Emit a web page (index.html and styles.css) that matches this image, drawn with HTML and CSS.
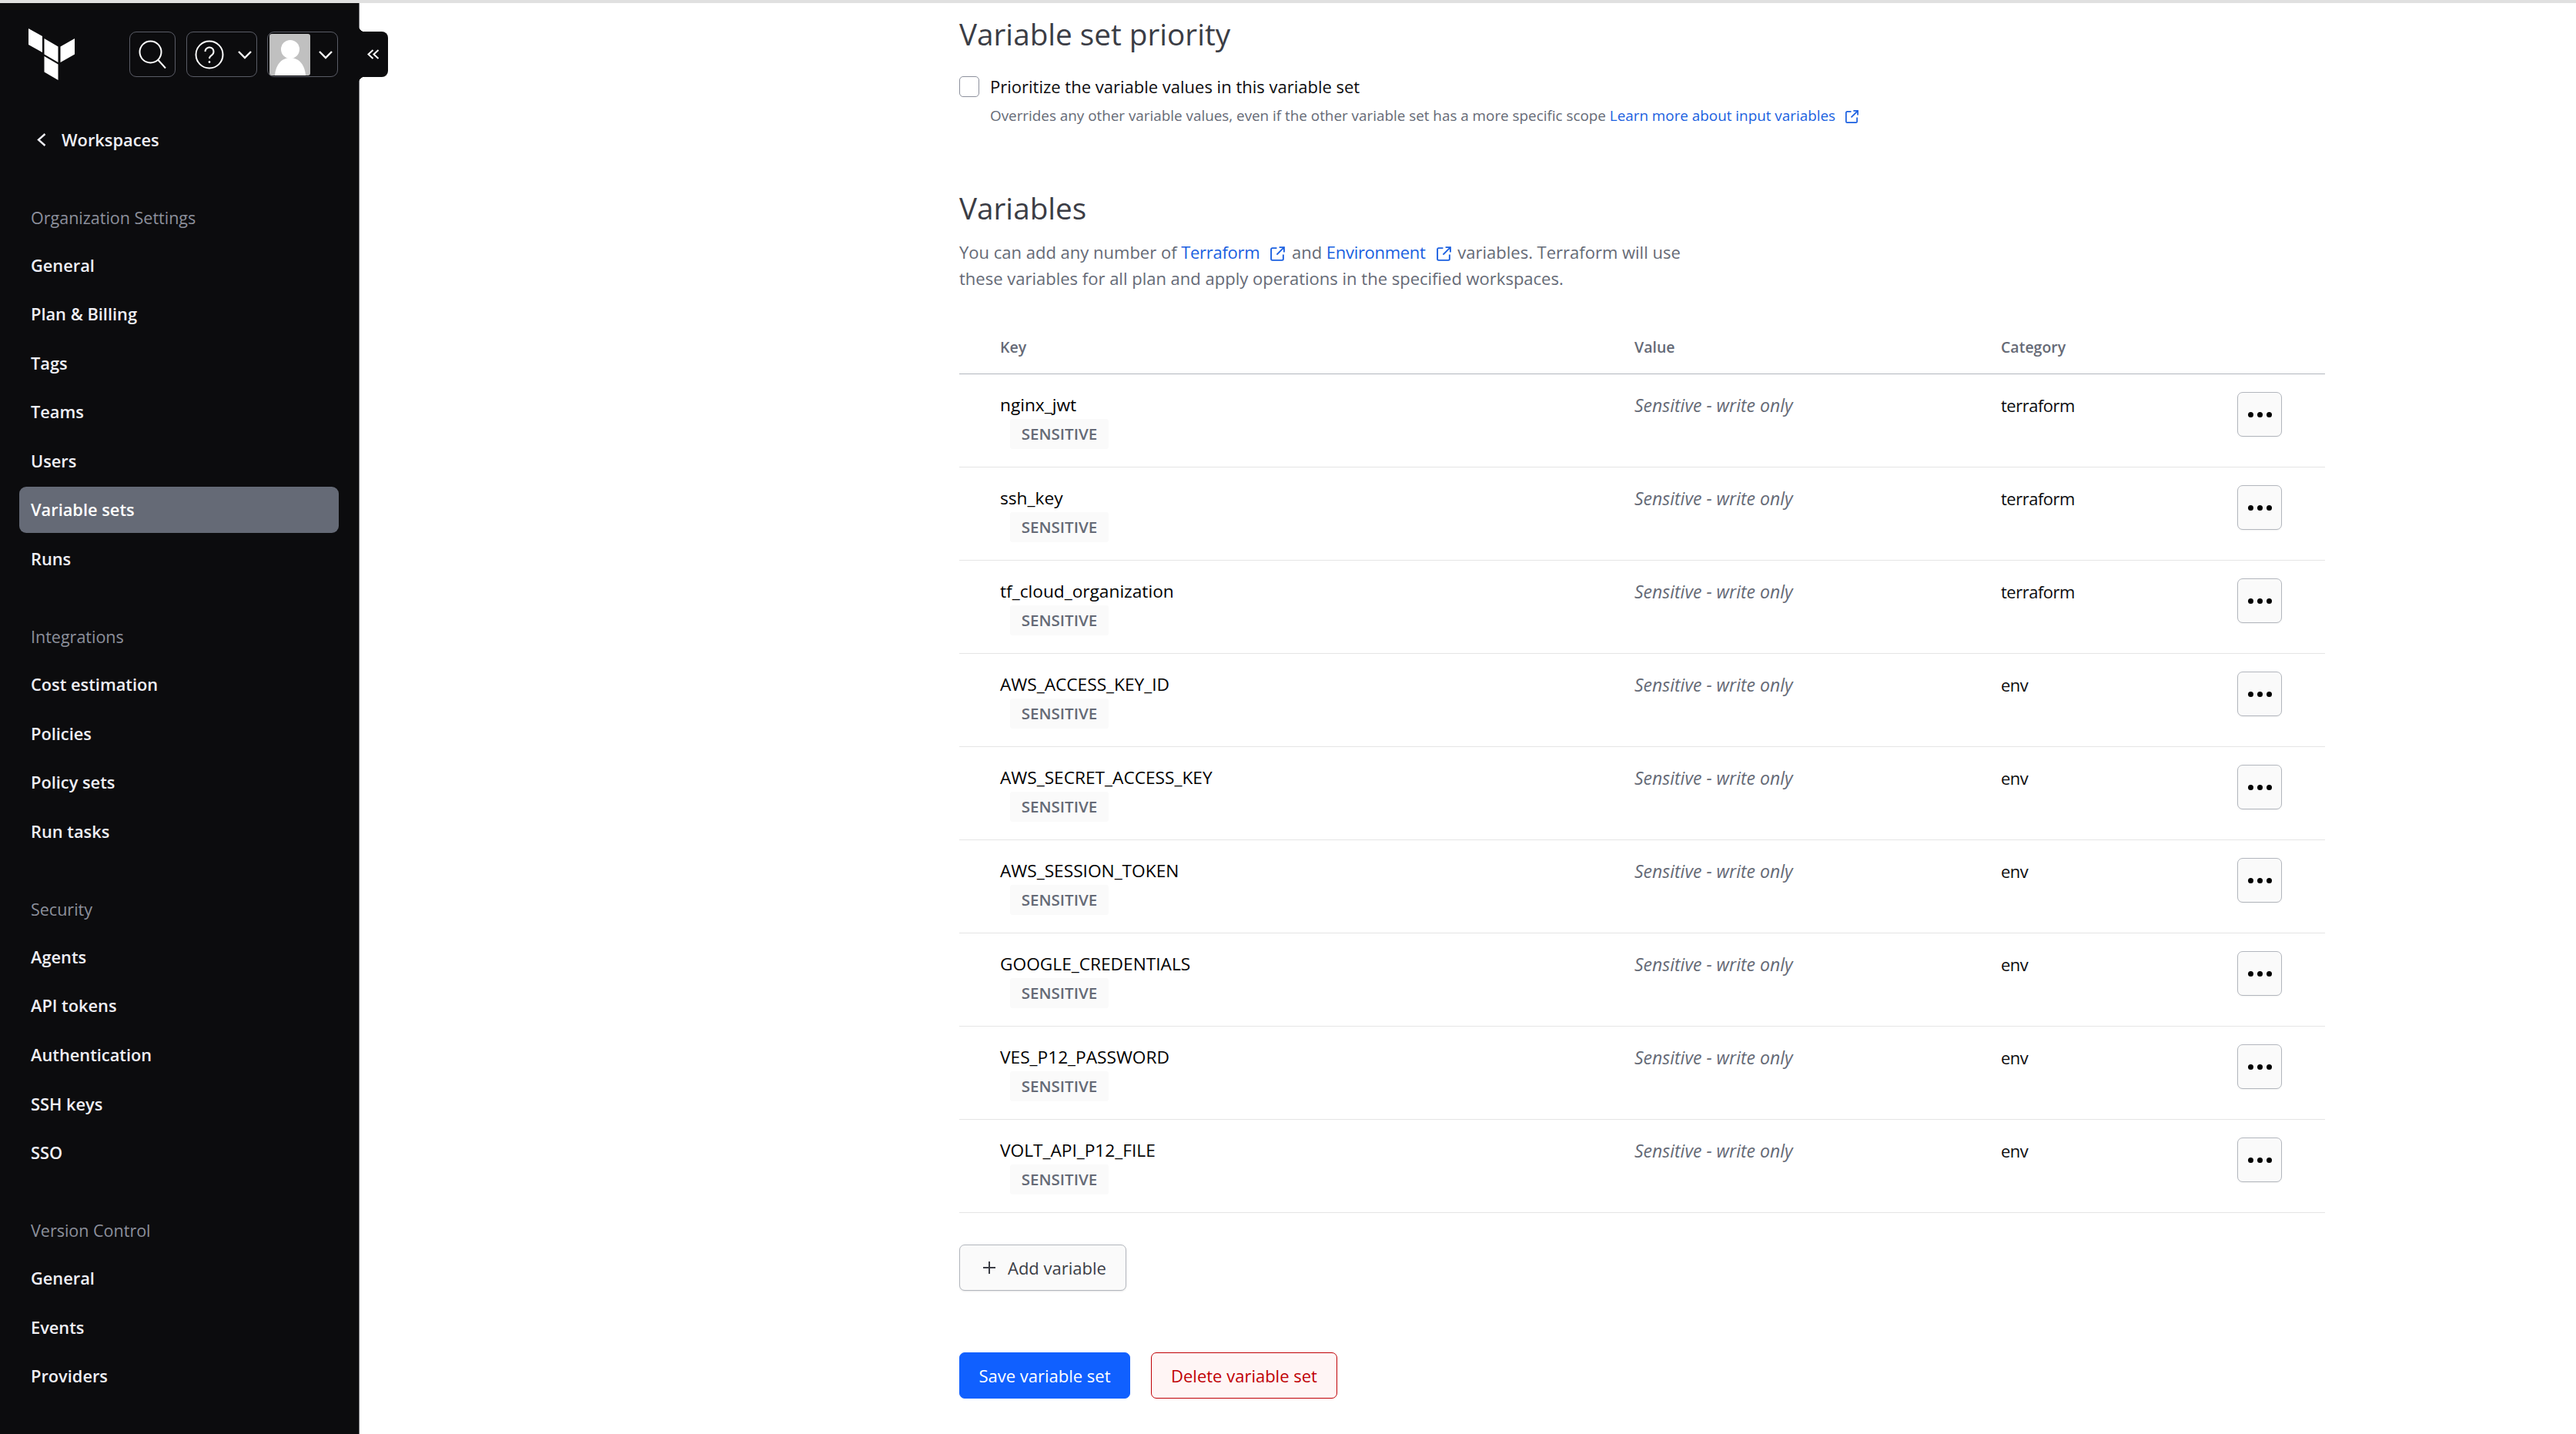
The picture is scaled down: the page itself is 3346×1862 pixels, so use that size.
FILE: index.html
```html
<!DOCTYPE html>
<html lang="en">
<head>
    <meta charset="UTF-8">
    <title>Variable sets</title>
    <link rel="stylesheet" href="styles.css">
</head>
<body>
<div class="page">
    <aside class="sidebar">
        <div class="topbar">
            <svg class="logo" viewBox="0 0 61 68" fill="#fff"><path d="M0 0L18 10V31L0 21Z"/><path d="M20.500 13L38.500 23.500V44L20.500 33.500Z"/><path d="M41.500 23.500L60 13V33.500L41.500 44Z"/><path d="M20.500 36L38.500 46.500V67L20.500 56.500Z"/></svg>
            <div class="top-btn search-btn">
                <svg width="36" height="38" viewBox="0 0 36 38" fill="none" stroke="#fff" stroke-width="2"><circle cx="15.500" cy="15.500" r="14"/><path d="M25.500 26L35 36.500"/></svg>
            </div>
            <div class="top-btn help-btn">
                <svg width="38" height="38" viewBox="0 0 38 38" fill="none" stroke="#fff" stroke-width="2"><circle cx="19" cy="19" r="17.500"/><path d="M13.500 15a5.500 5.500 0 1 1 8.500 4.600c-2 1.300-3 2.200-3 4.400"/><circle cx="19" cy="28.500" r="1" fill="#fff" stroke-width="1"/></svg>
                <svg class="chev" viewBox="0 0 18 12" fill="none" stroke="#fff" stroke-width="2.400"><path d="M1 2L9 10L17 2"/></svg>
            </div>
            <div class="top-btn user-btn">
                <svg class="avatar" viewBox="0 0 53 54"><rect width="53" height="54" rx="3" fill="#c0c0c0"/><circle cx="27" cy="20" r="12" fill="#fff"/><path d="M7 54C8 40 16 31 27 31S46 40 47 54Z" fill="#fff"/></svg>
                <svg class="chev" viewBox="0 0 18 12" fill="none" stroke="#fff" stroke-width="2.400"><path d="M1 2L9 10L17 2"/></svg>
            </div>
        </div>

        <a class="back-link">
            <svg width="12" height="17" viewBox="0 0 12 17" fill="none" stroke="#efeff5" stroke-width="2.400"><path d="M10.500 1L2 8.500L10.500 16"/></svg>
            Workspaces
        </a>

        <nav class="nav">
            <div class="nav-section">
                <div class="nav-head">Organization Settings</div>
                <a class="nav-item">General</a>
                <a class="nav-item">Plan &amp; Billing</a>
                <a class="nav-item">Tags</a>
                <a class="nav-item">Teams</a>
                <a class="nav-item">Users</a>
                <a class="nav-item active">Variable sets</a>
                <a class="nav-item">Runs</a>
            </div>
            <div class="nav-section">
                <div class="nav-head">Integrations</div>
                <a class="nav-item">Cost estimation</a>
                <a class="nav-item">Policies</a>
                <a class="nav-item">Policy sets</a>
                <a class="nav-item">Run tasks</a>
            </div>
            <div class="nav-section">
                <div class="nav-head">Security</div>
                <a class="nav-item">Agents</a>
                <a class="nav-item">API tokens</a>
                <a class="nav-item">Authentication</a>
                <a class="nav-item">SSH keys</a>
                <a class="nav-item">SSO</a>
            </div>
            <div class="nav-section">
                <div class="nav-head">Version Control</div>
                <a class="nav-item">General</a>
                <a class="nav-item">Events</a>
                <a class="nav-item">Providers</a>
            </div>
        </nav>

        <div class="collapse-tab">
            <svg width="16" height="13" viewBox="0 0 16 13" fill="none" stroke="#fff" stroke-width="2"><path d="M7.500 1L1.500 6.500L7.500 12"/><path d="M14.500 1L8.500 6.500L14.500 12"/></svg>
        </div>
    </aside>

    <main class="main">
        <h2 class="section-title first">Variable set priority</h2>
        <div class="check-row">
            <span class="checkbox"></span>
            <label class="check-label">Prioritize the variable values in this variable set</label>
        </div>
        <p class="help">Overrides any other variable values, even if the other variable set has a more specific scope <a class="link">Learn more about input variables<svg class="ext small" viewBox="0 0 20 20" fill="none" stroke="#1a5fe0" stroke-width="1.800"><path d="M9 3H3.500A1.500 1.500 0 0 0 2 4.500V16.500A1.500 1.500 0 0 0 3.500 18H15.500A1.500 1.500 0 0 0 17 16.500V11"/><path d="M12 2H18V8"/><path d="M18 2L9 11"/></svg></a></p>

        <h2 class="section-title second">Variables</h2>
        <p class="intro">You can add any number of <a class="link">Terraform<svg class="ext" viewBox="0 0 20 20" fill="none" stroke="#1a5fe0" stroke-width="1.800"><path d="M9 3H3.500A1.500 1.500 0 0 0 2 4.500V16.500A1.500 1.500 0 0 0 3.500 18H15.500A1.500 1.500 0 0 0 17 16.500V11"/><path d="M12 2H18V8"/><path d="M18 2L9 11"/></svg></a> and <a class="link">Environment<svg class="ext" viewBox="0 0 20 20" fill="none" stroke="#1a5fe0" stroke-width="1.800"><path d="M9 3H3.500A1.500 1.500 0 0 0 2 4.500V16.500A1.500 1.500 0 0 0 3.500 18H15.500A1.500 1.500 0 0 0 17 16.500V11"/><path d="M12 2H18V8"/><path d="M18 2L9 11"/></svg></a> variables. Terraform will use<br>these variables for all plan and apply operations in the specified workspaces.</p>

        <div class="var-table">
            <div class="var-row var-header">
                <div class="key-cell">Key</div>
                <div>Value</div>
                <div>Category</div>
                <div></div>
            </div>
            <div class="var-row">
                <div class="key-cell"><div class="key-name">nginx_jwt</div><span class="badge">SENSITIVE</span></div>
                <div class="value-cell">Sensitive - write only</div>
                <div class="cat-cell">terraform</div>
                <div><button class="more-btn"><i></i><i></i><i></i></button></div>
            </div>
            <div class="var-row">
                <div class="key-cell"><div class="key-name">ssh_key</div><span class="badge">SENSITIVE</span></div>
                <div class="value-cell">Sensitive - write only</div>
                <div class="cat-cell">terraform</div>
                <div><button class="more-btn"><i></i><i></i><i></i></button></div>
            </div>
            <div class="var-row">
                <div class="key-cell"><div class="key-name">tf_cloud_organization</div><span class="badge">SENSITIVE</span></div>
                <div class="value-cell">Sensitive - write only</div>
                <div class="cat-cell">terraform</div>
                <div><button class="more-btn"><i></i><i></i><i></i></button></div>
            </div>
            <div class="var-row">
                <div class="key-cell"><div class="key-name">AWS_ACCESS_KEY_ID</div><span class="badge">SENSITIVE</span></div>
                <div class="value-cell">Sensitive - write only</div>
                <div class="cat-cell">env</div>
                <div><button class="more-btn"><i></i><i></i><i></i></button></div>
            </div>
            <div class="var-row">
                <div class="key-cell"><div class="key-name">AWS_SECRET_ACCESS_KEY</div><span class="badge">SENSITIVE</span></div>
                <div class="value-cell">Sensitive - write only</div>
                <div class="cat-cell">env</div>
                <div><button class="more-btn"><i></i><i></i><i></i></button></div>
            </div>
            <div class="var-row">
                <div class="key-cell"><div class="key-name">AWS_SESSION_TOKEN</div><span class="badge">SENSITIVE</span></div>
                <div class="value-cell">Sensitive - write only</div>
                <div class="cat-cell">env</div>
                <div><button class="more-btn"><i></i><i></i><i></i></button></div>
            </div>
            <div class="var-row">
                <div class="key-cell"><div class="key-name">GOOGLE_CREDENTIALS</div><span class="badge">SENSITIVE</span></div>
                <div class="value-cell">Sensitive - write only</div>
                <div class="cat-cell">env</div>
                <div><button class="more-btn"><i></i><i></i><i></i></button></div>
            </div>
            <div class="var-row">
                <div class="key-cell"><div class="key-name">VES_P12_PASSWORD</div><span class="badge">SENSITIVE</span></div>
                <div class="value-cell">Sensitive - write only</div>
                <div class="cat-cell">env</div>
                <div><button class="more-btn"><i></i><i></i><i></i></button></div>
            </div>
            <div class="var-row">
                <div class="key-cell"><div class="key-name">VOLT_API_P12_FILE</div><span class="badge">SENSITIVE</span></div>
                <div class="value-cell">Sensitive - write only</div>
                <div class="cat-cell">env</div>
                <div><button class="more-btn"><i></i><i></i><i></i></button></div>
            </div>
        </div>

        <button class="btn add-btn">
            <svg width="18" height="18" viewBox="0 0 18 18" stroke="#3b3d45" stroke-width="2"><path d="M9 1V17M1 9H17"/></svg>
            Add variable
        </button>

        <div class="form-actions">
            <button class="btn save-btn">Save variable set</button>
            <button class="btn delete-btn">Delete variable set</button>
        </div>
    </main>
</div>
</body>
</html>
```

FILE: styles.css
```css
* {
    box-sizing: border-box;
}
html, body {
    margin: 0;
    height: 100%;
    overflow: hidden;
}
body {
    font-family: "Open Sans", "Noto Sans", Arial, sans-serif;
    font-stretch: 90%;
    background: #fff;
    border-top: 4px solid #e0e0e0;
}
.page {
    display: flex;
    height: 1858px;
}

/* sidebar */
.sidebar {
    position: relative;
    flex: 0 0 467px;
    background: #0c0c0e;
    border-right: 1px solid #6e6f74;
    color: #efeff5;
}
.topbar {
    display: flex;
    align-items: flex-start;
    height: 96px;
    padding: 37px 0 0 37px;
}
.logo {
    width: 61px;
    height: 68px;
    margin-right: 70px;
    margin-top: -4px;
}
.top-btn {
    display: flex;
    align-items: center;
    height: 59px;
    border: 1px solid #5a5c66;
    border-radius: 9px;
}
.search-btn {
    width: 60px;
    justify-content: center;
    margin-right: 14px;
}
.help-btn {
    width: 92px;
    padding-left: 10px;
    margin-right: 13px;
}
.help-btn .chev {
    margin-left: 18px;
}
.user-btn {
    width: 92px;
    padding-left: 2px;
}
.user-btn .chev {
    margin-left: 11px;
}
.chev {
    width: 18px;
    height: 12px;
}
.avatar {
    width: 53px;
    height: 54px;
}
.back-link {
    display: flex;
    align-items: center;
    gap: 20px;
    height: 40px;
    margin-top: 61px;
    padding-left: 48px;
    font-size: 21.800px;
    font-weight: 600;
}
.nav {
    margin-top: 51px;
    display: flex;
    flex-direction: column;
    gap: 41px;
}
.nav-section {
    display: flex;
    flex-direction: column;
    gap: 3.6px;
}
.nav-head {
    display: flex;
    align-items: center;
    height: 60px;
    margin-bottom: -1.600px;
    padding-left: 40px;
    font-size: 21.500px;
    color: #8c909c;
}
.nav-item {
    display: flex;
    align-items: center;
    height: 60px;
    margin: 0 26px 0 25px;
    padding-left: 15px;
    font-size: 21.800px;
    font-weight: 600;
    border-radius: 9px;
}
.nav-item.active {
    background: #656a76;
    color: #fff;
}
.collapse-tab {
    position: absolute;
    top: 37px;
    left: 466px;
    display: flex;
    align-items: center;
    justify-content: center;
    width: 38px;
    height: 59px;
    background: #0c0c0e;
    border-radius: 0 8px 8px 0;
}
.collapse-tab::before,
.collapse-tab::after {
    content: "";
    position: absolute;
    left: 0;
    width: 8px;
    height: 8px;
    background: radial-gradient(circle at 100% 0, transparent 8px, #0c0c0e 8.5px);
}
.collapse-tab::before {
    top: -8px;
}
.collapse-tab::after {
    bottom: -8px;
    background: radial-gradient(circle at 100% 100%, transparent 8px, #0c0c0e 8.5px);
}

/* main column */
.main {
    flex: 1;
    padding-left: 779px;
}
.section-title {
    margin: 0;
    font-size: 38.700px;
    font-weight: 500;
    line-height: 50px;
    color: #3b3d45;
}
.section-title.first {
    margin-top: 15px;
}
.section-title.second {
    margin-top: 82px;
}
.check-row {
    display: flex;
    align-items: center;
    gap: 14px;
    height: 28px;
    margin-top: 29px;
}
.checkbox {
    width: 26px;
    height: 27px;
    background: #fff;
    border: 1px solid #8c909c;
    border-radius: 5px;
}
.check-label {
    font-size: 22px;
    color: #0c0c0e;
}
.help {
    margin: 11px 0 0 40px;
    font-size: 18.850px;
    line-height: 26px;
    color: #656a76;
}
.help .link {
    letter-spacing: 0;
}
.intro {
    margin: 15px 0 0;
    font-size: 22px;
    line-height: 34px;
    color: #656a76;
}
.link {
    color: #1a5fe0;
    letter-spacing: -0.3px;
}
.ext {
    width: 21px;
    height: 21px;
    margin: 0 2px 0 13px;
    vertical-align: -4px;
}
.ext.small {
    width: 19px;
    height: 19px;
    margin: 0 0 0 12px;
}

/* table of variables */
.var-table {
    width: 1774px;
    margin-top: 39px;
}
.var-row {
    display: grid;
    grid-template-columns: 877px 476px 307px 114px;
    height: 121px;
    padding-top: 23px;
    border-bottom: 1px solid #e5e5e5;
    font-size: 22px;
    line-height: 34px;
}
.var-header {
    height: 69px;
    padding-top: 17px;
    border-bottom: 1px solid #b2b6bd;
    font-size: 19.500px;
    font-weight: 600;
    color: #656a76;
}
.key-cell {
    padding-left: 53px;
}
.key-name {
    font-size: 22.700px;
    color: #000;
}
.badge {
    display: block;
    width: 128px;
    height: 39px;
    margin: 1px 0 0 13px;
    background: #fafafa;
    border-radius: 3px;
    font-size: 20.500px;
    font-weight: 600;
    line-height: 39px;
    text-align: center;
    color: #656a76;
}
.value-cell {
    font-size: 23px;
    font-style: italic;
    color: #656a76;
}
.cat-cell {
    letter-spacing: -0.5px;
    color: #0c0c0e;
}
.more-btn {
    display: flex;
    align-items: center;
    justify-content: center;
    gap: 5px;
    width: 58px;
    height: 58px;
    padding: 0;
    background: #fafafa;
    border: 1px solid #b2b6bd;
    border-radius: 7px;
    box-shadow: 0 1px 2px rgba(0, 0, 0, 0.05);
}
.more-btn i {
    width: 7px;
    height: 7px;
    background: #000;
    border-radius: 50%;
}

/* buttons */
.btn {
    display: flex;
    align-items: center;
    justify-content: center;
    height: 60px;
    padding: 0;
    font-family: inherit;
    font-stretch: inherit;
    font-size: 22px;
    border-radius: 7px;
}
.add-btn {
    justify-content: flex-start;
    gap: 15px;
    width: 217px;
    margin-top: 41px;
    padding-left: 29px;
    background: #fafafa;
    border: 1px solid #b2b6bd;
    color: #3b3d45;
    box-shadow: 0 1px 2px rgba(0, 0, 0, 0.1);
}
.form-actions {
    display: flex;
    gap: 27px;
    margin-top: 80px;
}
.save-btn {
    width: 222px;
    background: #1060ff;
    border: 1px solid #1060ff;
    color: #fff;
}
.delete-btn {
    width: 242px;
    background: #fff5f5;
    border: 1px solid #c00005;
    color: #c00005;
}
```
